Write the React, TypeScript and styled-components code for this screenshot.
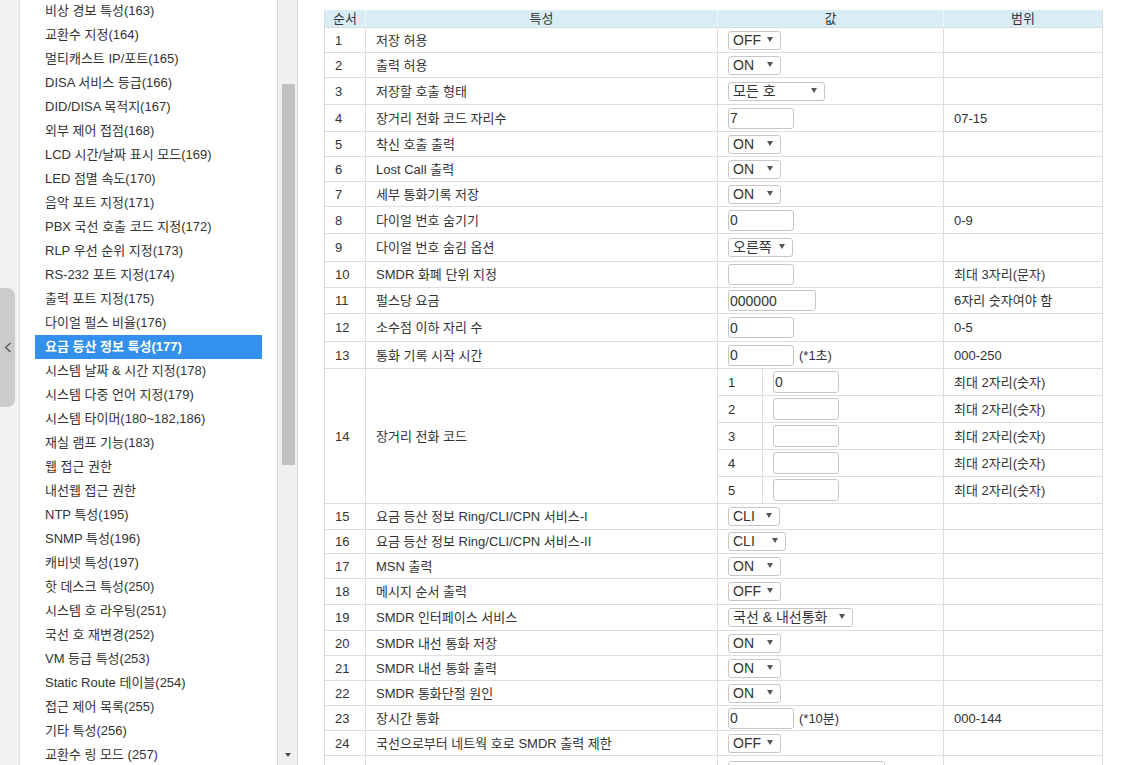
import React from "react";
import styled, { createGlobalStyle } from "styled-components";

const FONT = `"Liberation Sans", "Noto Sans CJK KR", sans-serif`;

const GlobalStyle = createGlobalStyle`
  html, body { margin: 0; padding: 0; height: 765px; overflow: hidden; background: #fff; }
  body { font-family: ${FONT}; font-size: 13px; color: #333; }
  * { box-sizing: border-box; }
`;

const Page = styled.div`
  display: flex;
  height: 765px;
  overflow: hidden;
`;

const EdgeStrip = styled.div`
  width: 20px;
  flex: none;
  background: #f1f1f1;
  border-right: 1px solid #e2e2e2;
  padding-top: 288px;
`;

const CollapseHandle = styled.button`
  width: 15px;
  height: 119px;
  border: none;
  margin: 0;
  padding: 0;
  background: #cbcbcb;
  border-radius: 0 8px 8px 0;
  display: flex;
  align-items: center;
  justify-content: center;
  cursor: pointer;
`;

const Sidebar = styled.nav`
  width: 257px;
  flex: none;
  background: #fff;
  padding: 0 15px;
  overflow: hidden;
`;

const MenuList = styled.ul`
  list-style: none;
  margin: -1px 0 0;
  padding: 0;
`;

const MenuItem = styled.li<{ $active?: boolean }>`
  height: 24px;
  line-height: 24px;
  padding-left: 10px;
  white-space: nowrap;
  font-size: 13px;
  color: ${(p) => (p.$active ? "#fff" : "#333")};
  background: ${(p) => (p.$active ? "#3390ec" : "transparent")};
  font-weight: ${(p) => (p.$active ? 700 : 400)};
`;

const ScrollTrack = styled.div`
  width: 21px;
  flex: none;
  background: #f0f0f0;
  border-left: 1px solid #d4d4d4;
  border-right: 1px solid #d4d4d4;
  display: flex;
  flex-direction: column;
  padding-top: 84px;
`;

const ScrollThumb = styled.div`
  width: 13px;
  height: 381px;
  margin-left: 4px;
  background: #c1c1c1;
`;

const ScrollArrowDown = styled.div`
  margin-top: auto;
  margin-bottom: 8px;
  margin-left: 7px;
  width: 0;
  height: 0;
  border-left: 3.5px solid transparent;
  border-right: 3.5px solid transparent;
  border-top: 4px solid #505050;
`;

const Main = styled.main`
  flex: 1;
  padding: 10px 24px 0 26px;
  overflow: hidden;
  background: #fff;
`;

const PropTable = styled.table`
  width: 779px;
  table-layout: fixed;
  border-collapse: separate;
  border-spacing: 0;
  border-left: 1px solid #ddd;
  font-size: 13px;
  color: #333;
`;

const HeadCell = styled.th`
  height: 18px;
  padding: 0;
  background: #d9edf7;
  font-weight: 400;
  text-align: center;
  line-height: 17px;
  color: #333;
  border-right: 1px solid #edf5f9;
  border-bottom: 1px solid #ddd;
  &:last-child { border-right-color: #ddd; }
`;

const Row = styled.tr<{ $h: number }>`
  height: ${(p) => p.$h}px;
`;

const Cell = styled.td`
  padding: 0 10px;
  border-right: 1px solid #ddd;
  border-bottom: 1px solid #ddd;
  vertical-align: middle;
  line-height: 17px;
  white-space: nowrap;
  overflow: hidden;
`;

const SplitCell = styled(Cell)`
  padding: 0;
`;

const SubValue = styled.div`
  display: flex;
  height: 26px;
`;

const SubNum = styled.div`
  width: 45px;
  flex: none;
  border-right: 1px solid #ddd;
  padding-left: 10px;
  display: flex;
  align-items: center;
`;

const SubField = styled.div`
  flex: 1;
  padding-left: 10px;
  display: flex;
  align-items: center;
`;

const SelectWrap = styled.span<{ $w: number }>`
  position: relative;
  display: inline-block;
  width: ${(p) => p.$w}px;
  height: 19px;
  vertical-align: middle;
`;

const NativeSelect = styled.select`
  appearance: none;
  -webkit-appearance: none;
  width: 100%;
  height: 100%;
  margin: 0;
  padding: 0 14px 0 4px;
  border: 1px solid #c6c6c6;
  border-radius: 3px;
  background: #fff;
  font-family: ${FONT};
  font-size: 14px;
  line-height: 17px;
  color: #333;
  outline: none;
`;

const Caret = styled.span`
  position: absolute;
  right: 8px;
  top: 6px;
  width: 0;
  height: 0;
  border-left: 3px solid transparent;
  border-right: 3px solid transparent;
  border-top: 5px solid #555;
  pointer-events: none;
`;

const TextInput = styled.input<{ $w: number; $h?: number }>`
  width: ${(p) => p.$w}px;
  height: ${(p) => p.$h ?? 21}px;
  margin: 0;
  padding: 0 1px;
  border: 1px solid #c6c6c6;
  border-radius: 3px;
  font-family: ${FONT};
  font-size: 14px;
  color: #333;
  vertical-align: middle;
  outline: none;
`;

const Unit = styled.span`
  margin-left: 5px;
  vertical-align: middle;
`;

const Chevron = () => (
  <svg width="8" height="11" viewBox="0 0 8 11" fill="none" stroke="#555" strokeWidth="1.3">
    <polyline points="6.5,1 1.5,5.5 6.5,10" />
  </svg>
);

type Val =
  | { kind: "select"; text: string; w: number }
  | { kind: "input"; text: string; w: number; unit?: string };

const sel = (text: string, w: number): Val => ({ kind: "select", text, w });
const inp = (text: string, w: number, unit?: string): Val => ({ kind: "input", text, w, unit });

type RowData = { no: number | ""; name: string; val: Val; range?: string; h: number };

const menu = [
  "비상 경보 특성(163)",
  "교환수 지정(164)",
  "멀티캐스트 IP/포트(165)",
  "DISA 서비스 등급(166)",
  "DID/DISA 목적지(167)",
  "외부 제어 접점(168)",
  "LCD 시간/날짜 표시 모드(169)",
  "LED 점멸 속도(170)",
  "음악 포트 지정(171)",
  "PBX 국선 호출 코드 지정(172)",
  "RLP 우선 순위 지정(173)",
  "RS-232 포트 지정(174)",
  "출력 포트 지정(175)",
  "다이얼 펄스 비율(176)",
  "요금 등산 정보 특성(177)",
  "시스템 날짜 & 시간 지정(178)",
  "시스템 다중 언어 지정(179)",
  "시스템 타이머(180~182,186)",
  "재실 램프 기능(183)",
  "웹 접근 권한",
  "내선웹 접근 권한",
  "NTP 특성(195)",
  "SNMP 특성(196)",
  "캐비넷 특성(197)",
  "핫 데스크 특성(250)",
  "시스템 호 라우팅(251)",
  "국선 호 재변경(252)",
  "VM 등급 특성(253)",
  "Static Route 테이블(254)",
  "접근 제어 목록(255)",
  "기타 특성(256)",
  "교환수 링 모드 (257)",
];
const ACTIVE = 14;

const topRows: RowData[] = [
  { no: 1, name: "저장 허용", val: sel("OFF", 53), h: 25 },
  { no: 2, name: "출력 허용", val: sel("ON", 53), h: 25 },
  { no: 3, name: "저장할 호출 형태", val: sel("모든 호", 97), h: 27 },
  { no: 4, name: "장거리 전화 코드 자리수", val: inp("7", 66), range: "07-15", h: 27 },
  { no: 5, name: "착신 호출 출력", val: sel("ON", 53), h: 25 },
  { no: 6, name: "Lost Call 출력", val: sel("ON", 53), h: 25 },
  { no: 7, name: "세부 통화기록 저장", val: sel("ON", 53), h: 25 },
  { no: 8, name: "다이얼 번호 숨기기", val: inp("0", 66), range: "0-9", h: 27 },
  { no: 9, name: "다이얼 번호 숨김 옵션", val: sel("오른쪽", 65), h: 28 },
  { no: 10, name: "SMDR 화폐 단위 지정", val: inp("", 66), range: "최대 3자리(문자)", h: 26 },
  { no: 11, name: "펄스당 요금", val: inp("000000", 88), range: "6자리 숫자여야 함", h: 26 },
  { no: 12, name: "소수점 이하 자리 수", val: inp("0", 66), range: "0-5", h: 28 },
  { no: 13, name: "통화 기록 시작 시간", val: inp("0", 66, "(*1초)"), range: "000-250", h: 27 },
];

const codeRows = ["0", "", "", "", ""];

const bottomRows: RowData[] = [
  { no: 15, name: "요금 등산 정보 Ring/CLI/CPN 서비스-I", val: sel("CLI", 52), h: 26 },
  { no: 16, name: "요금 등산 정보 Ring/CLI/CPN 서비스-II", val: sel("CLI", 58), h: 24 },
  { no: 17, name: "MSN 출력", val: sel("ON", 53), h: 25 },
  { no: 18, name: "메시지 순서 출력", val: sel("OFF", 53), h: 26 },
  { no: 19, name: "SMDR 인터페이스 서비스", val: sel("국선 & 내선통화", 125), h: 26 },
  { no: 20, name: "SMDR 내선 통화 저장", val: sel("ON", 53), h: 25 },
  { no: 21, name: "SMDR 내선 통화 출력", val: sel("ON", 53), h: 25 },
  { no: 22, name: "SMDR 통화단절 원인", val: sel("ON", 53), h: 25 },
  { no: 23, name: "장시간 통화", val: inp("0", 66, "(*10분)"), range: "000-144", h: 25 },
  { no: 24, name: "국선으로부터 네트웍 호로 SMDR 출력 제한", val: sel("OFF", 53), h: 25 },
  { no: "", name: "", val: sel("", 157), h: 30 },
];

const Value = ({ v }: { v: Val }) =>
  v.kind === "select" ? (
    <SelectWrap $w={v.w}>
      <NativeSelect defaultValue={v.text}>
        <option>{v.text}</option>
      </NativeSelect>
      <Caret />
    </SelectWrap>
  ) : (
    <>
      <TextInput $w={v.w} defaultValue={v.text} />
      {v.unit && <Unit>{v.unit}</Unit>}
    </>
  );

const PlainRow = ({ r }: { r: RowData }) => (
  <Row $h={r.h}>
    <Cell>{r.no}</Cell>
    <Cell>{r.name}</Cell>
    <Cell>
      <Value v={r.val} />
    </Cell>
    <Cell>{r.range ?? ""}</Cell>
  </Row>
);

export default function App() {
  return (
    <>
      <GlobalStyle />
      <Page>
        <EdgeStrip>
          <CollapseHandle aria-label="collapse">
            <Chevron />
          </CollapseHandle>
        </EdgeStrip>
        <Sidebar>
          <MenuList>
            {menu.map((m, i) => (
              <MenuItem key={m} $active={i === ACTIVE}>
                {m}
              </MenuItem>
            ))}
          </MenuList>
        </Sidebar>
        <ScrollTrack>
          <ScrollThumb />
          <ScrollArrowDown />
        </ScrollTrack>
        <Main>
          <PropTable>
            <colgroup>
              <col style={{ width: 41 }} />
              <col style={{ width: 352 }} />
              <col style={{ width: 226 }} />
              <col style={{ width: 159 }} />
            </colgroup>
            <thead>
              <tr>
                <HeadCell>순서</HeadCell>
                <HeadCell>특성</HeadCell>
                <HeadCell>값</HeadCell>
                <HeadCell>범위</HeadCell>
              </tr>
            </thead>
            <tbody>
              {topRows.map((r) => (
                <PlainRow key={`r-${r.no}`} r={r} />
              ))}
              {codeRows.map((c, i) => (
                <Row $h={27} key={`code-${i}`}>
                  {i === 0 && <Cell rowSpan={5}>14</Cell>}
                  {i === 0 && <Cell rowSpan={5}>장거리 전화 코드</Cell>}
                  <SplitCell>
                    <SubValue>
                      <SubNum>{i + 1}</SubNum>
                      <SubField>
                        <TextInput $w={66} $h={22} defaultValue={c} />
                      </SubField>
                    </SubValue>
                  </SplitCell>
                  <Cell>최대 2자리(숫자)</Cell>
                </Row>
              ))}
              {bottomRows.map((r, i) => (
                <PlainRow key={`b-${i}`} r={r} />
              ))}
            </tbody>
          </PropTable>
        </Main>
      </Page>
    </>
  );
}
